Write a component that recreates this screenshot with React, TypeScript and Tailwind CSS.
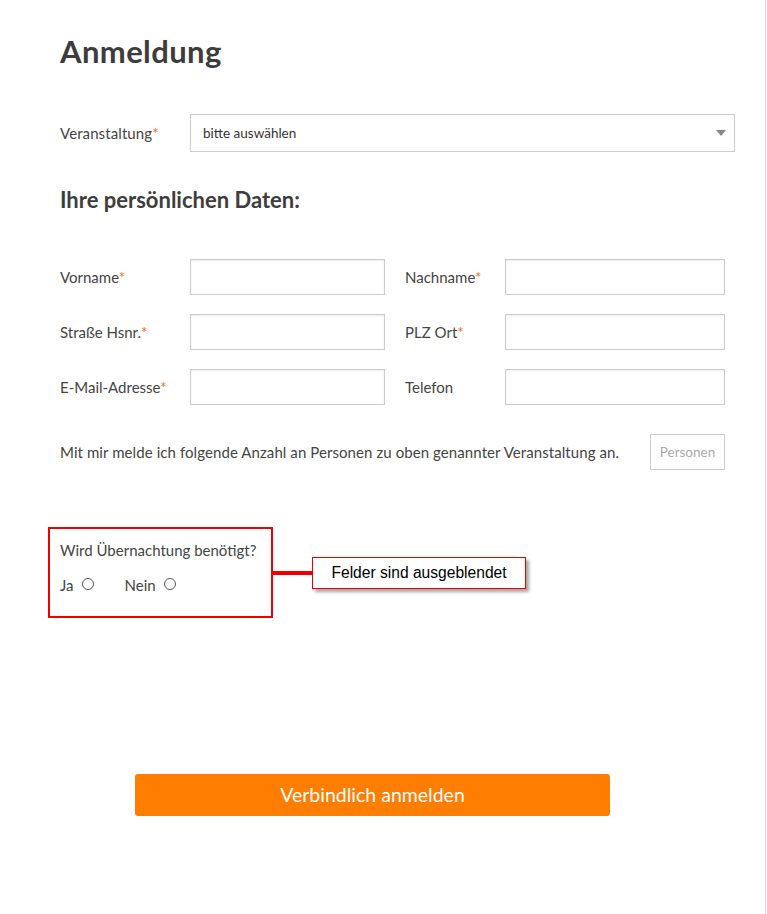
import React from "react";

const Star = () => <span className="text-[#f26a1b]">*</span>;

const Input = ({ className = "" }: { className?: string }) => (
  <div className={`h-[36px] border border-[#cccccc] bg-white shadow-[inset_0_1px_2px_rgba(0,0,0,0.08)] ${className}`} />
);

const Radio = () => (
  <span className="inline-block w-[12px] h-[12px] rounded-full border border-[#555] bg-white ml-[8px] relative top-[-1px]" />
);

export default function App() {
  const font = { fontFamily: "Lato, 'Open Sans', sans-serif" };
  return (
    <div className="w-[767px] min-h-[914px] bg-white text-[#444]" style={font}>
      <div className="w-[766px] min-h-[914px] border-r border-[#d8d8d8] pl-[60px] pr-[29px] pt-[33px] pb-[98px]">
        <h1 className="text-[31px] font-bold leading-[36px] text-[#3d3d3d] tracking-[0.4px]">Anmeldung</h1>

        <div className="flex items-center mt-[45px] mr-[1px]">
          <div className="w-[130px] text-[15px] tracking-[0.1px]">Veranstaltung<Star /></div>
          <div className="flex-1 h-[38px] border border-[#cccccc] flex items-center justify-between pl-[12px] pr-[8px]">
            <span className="text-[13.5px] text-[#333]">bitte auswählen</span>
            <svg width="10" height="6" viewBox="0 0 10 6"><path d="M0 0h10L5 6z" fill="#888" /></svg>
          </div>
        </div>

        <h2 className="mt-[35px] text-[22px] font-bold leading-[26px] text-[#3d3d3d]">Ihre persönlichen Daten:</h2>

        <div className="mt-[46px] flex flex-col gap-[19px] pr-[11px]">
          {[
            ["Vorname", true, "Nachname", true],
            ["Straße Hsnr.", true, "PLZ Ort", true],
            ["E-Mail-Adresse", true, "Telefon", false],
          ].map((r, i) => (
            <div key={i} className="flex items-center text-[15px]">
              <div className="w-[130px] shrink-0">{r[0]}{r[1] ? <Star /> : null}</div>
              <Input className="w-[195px] shrink-0" />
              <div className="w-[100px] pl-[20px] box-content shrink-0">{r[2]}{r[3] ? <Star /> : null}</div>
              <Input className="w-[220px] shrink-0" />
            </div>
          ))}
        </div>

        <div className="mt-[29px] flex items-center justify-between pr-[11px]">
          <div className="text-[15px] tracking-[0.08px]">Mit mir melde ich folgende Anzahl an Personen zu oben genannter Veranstaltung an.</div>
          <div className="w-[75px] h-[36px] border border-[#cccccc] flex items-center justify-center text-[13.5px] text-[#aaa]">Personen</div>
        </div>

        <div className="relative mt-[57px] ml-[-12px] w-[225px] h-[91px] border-2 border-[#ee0000] pl-[10px] pt-[11px]">
          <div className="text-[15px] leading-[20px]">Wird Übernachtung benötigt?</div>
          <div className="mt-[15px] flex items-center text-[15px] leading-[20px]">
            <span>Ja</span><Radio />
            <span className="ml-[31px]">Nein</span><Radio />
          </div>
          <div className="absolute left-[221px] top-[42px] w-[42px] h-[4px] bg-[#ee0000]" />
          <div
            className="absolute left-[262px] top-[28px] w-[214px] h-[32px] border border-[#ee0000] bg-white shadow-[3px_3px_3px_rgba(0,0,0,0.35)] flex items-center justify-center text-[15.6px] text-black"
            style={{ fontFamily: "'Liberation Sans', Arial, sans-serif" }}
          >
            Felder sind ausgeblendet
          </div>
        </div>

        <div className="mt-[156px] ml-[75px] w-[475px] h-[42px] rounded-[3px] bg-[#ff7d00] flex items-center justify-center text-white text-[19.5px]">
          Verbindlich anmelden
        </div>
      </div>
    </div>
  );
}
